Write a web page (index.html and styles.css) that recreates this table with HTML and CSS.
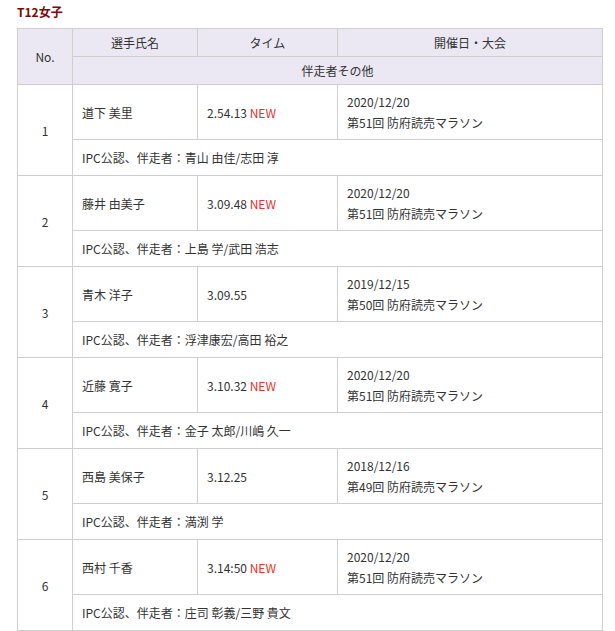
FILE: index.html
```html
<!DOCTYPE html>
<html lang="ja">
<head>
<meta charset="utf-8">
<link rel="stylesheet" href="styles.css">
</head>
<body>
<div class="page">
  <h3 class="title">T12女子</h3>
  <table class="rec">
    <colgroup>
      <col class="c-no"><col class="c-name"><col class="c-time"><col class="c-meet">
    </colgroup>
    <thead>
      <tr class="h1"><th rowspan="2">No.</th><th>選手氏名</th><th>タイム</th><th>開催日・大会</th></tr>
      <tr class="h2"><th colspan="3">伴走者その他</th></tr>
    </thead>
    <tbody>
      <tr class="top"><td class="no" rowspan="2">1</td><td>道下 美里</td><td>2.54.13 <span class="new">NEW</span></td><td>2020/12/20<br>第51回 防府読売マラソン</td></tr>
      <tr class="bot"><td colspan="3">IPC公認、伴走者：青山 由佳/志田 淳</td></tr>
      <tr class="top"><td class="no" rowspan="2">2</td><td>藤井 由美子</td><td>3.09.48 <span class="new">NEW</span></td><td>2020/12/20<br>第51回 防府読売マラソン</td></tr>
      <tr class="bot"><td colspan="3">IPC公認、伴走者：上島 学/武田 浩志</td></tr>
      <tr class="top"><td class="no" rowspan="2">3</td><td>青木 洋子</td><td>3.09.55</td><td>2019/12/15<br>第50回 防府読売マラソン</td></tr>
      <tr class="bot"><td colspan="3">IPC公認、伴走者：浮津康宏/高田 裕之</td></tr>
      <tr class="top"><td class="no" rowspan="2">4</td><td>近藤 寛子</td><td>3.10.32 <span class="new">NEW</span></td><td>2020/12/20<br>第51回 防府読売マラソン</td></tr>
      <tr class="bot"><td colspan="3">IPC公認、伴走者：金子 太郎/川嶋 久一</td></tr>
      <tr class="top"><td class="no" rowspan="2">5</td><td>西島 美保子</td><td>3.12.25</td><td>2018/12/16<br>第49回 防府読売マラソン</td></tr>
      <tr class="bot"><td colspan="3">IPC公認、伴走者：満渕 学</td></tr>
      <tr class="top"><td class="no" rowspan="2">6</td><td>西村 千香</td><td>3.14:50 <span class="new">NEW</span></td><td>2020/12/20<br>第51回 防府読売マラソン</td></tr>
      <tr class="bot"><td colspan="3">IPC公認、伴走者：庄司 彰義/三野 貴文</td></tr>
    </tbody>
  </table>
</div>
</body>
</html>
```

FILE: styles.css
```css
html, body {
  margin: 0;
  padding: 0;
  background: #fff;
}
.page {
  padding: 4px 13px 0 17px;
  font-family: "Noto Sans CJK JP", "Noto Sans", sans-serif;
  font-size: 12px;
  color: #333;
}
.title {
  margin: 0 0 8px 0;
  font-size: 12px;
  line-height: 16px;
  font-weight: bold;
  color: #7a0a0a;
}
.rec {
  width: 585px;
  border-collapse: collapse;
  table-layout: fixed;
}
.c-no { width: 55px; }
.c-name { width: 125px; }
.c-time { width: 140px; }
.c-meet { width: 265px; }
.rec th, .rec td {
  border: 1px solid #cfcfcf;
  padding: 0 9px;
  line-height: 21px;
  font-weight: normal;
  vertical-align: middle;
}
.rec th {
  background: #ebe8f3;
  text-align: center;
  height: 27px;
  padding: 0;
}
.rec td {
  text-align: left;
}
.rec td.no {
  text-align: center;
  padding: 0;
}
.top td {
  height: 54px;
}
.bot td {
  height: 35px;
}
.new {
  color: #e8302e;
}
```
